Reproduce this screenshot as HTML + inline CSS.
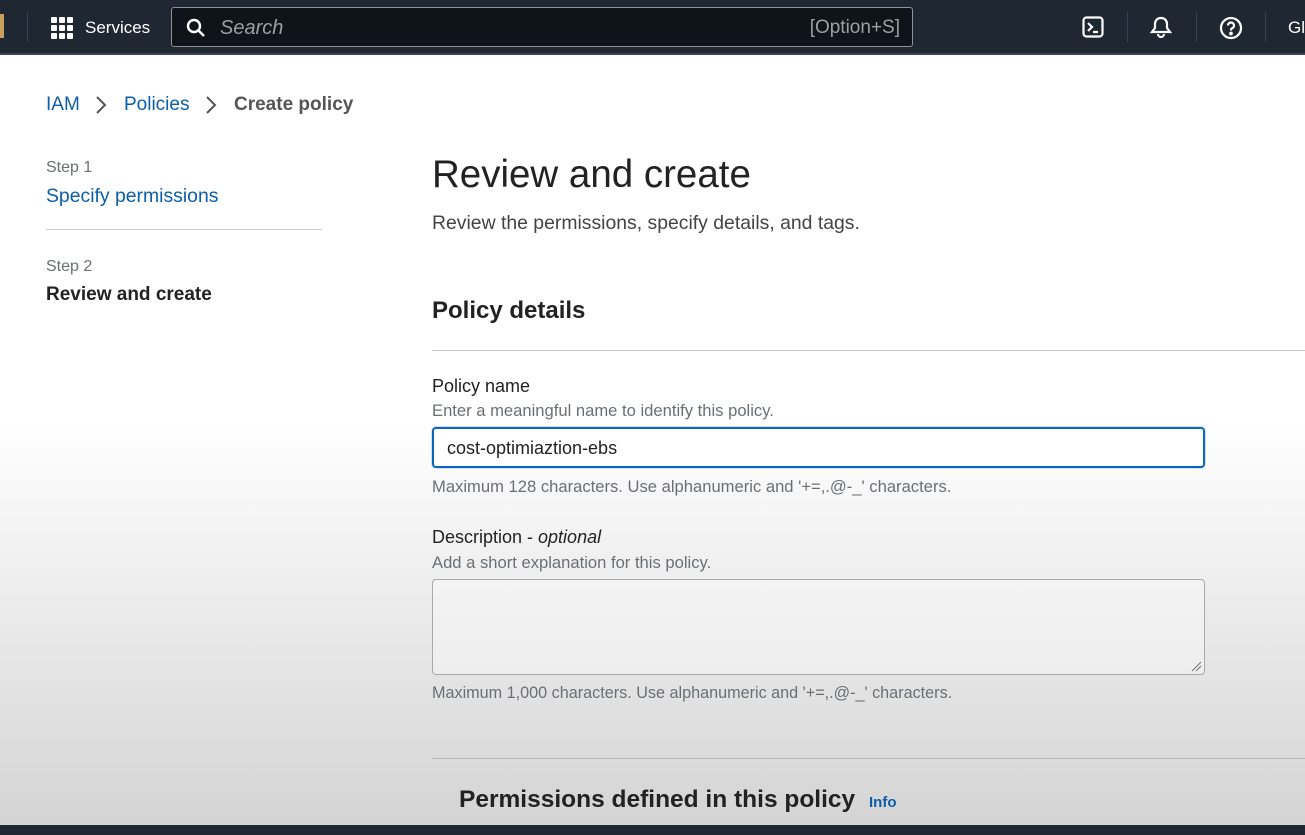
<!DOCTYPE html>
<html><head><style>
*{box-sizing:border-box;margin:0;padding:0}
body{width:1305px;height:835px;overflow:hidden;font-family:"Liberation Sans",sans-serif;position:relative;background:linear-gradient(180deg,#fff 0,#fff 420px,#ececec 600px,#d4d4d4 825px)}
.hdr{position:absolute;left:0;top:0;width:1305px;height:55px;background:#1f2733;border-bottom:2px solid #3a4452}
.a{position:absolute}
.srch{left:171px;top:7px;width:742px;height:40px;background:#0f141a;border:1px solid #8d939b;border-radius:3px}
.sep{position:absolute;top:12px;width:1px;height:30px;background:#39424e}
.bot{position:absolute;left:0;top:825px;width:1305px;height:10px;background:#1f2733}
.gray{color:#6b6f73}
.h{font-size:16.6px}
</style></head><body>
<div class="hdr">
 <div class="a" style="left:0;top:14px;width:4px;height:24px;background:#c8a060"></div>
 <div class="sep" style="left:27px"></div>
 <svg class="a" style="left:51px;top:17px" width="22" height="22" viewBox="0 0 22 22" fill="#fff">
  <rect x="0" y="0" width="6" height="6" rx="1"/><rect x="8" y="0" width="6" height="6" rx="1"/><rect x="16" y="0" width="6" height="6" rx="1"/>
  <rect x="0" y="8" width="6" height="6" rx="1"/><rect x="8" y="8" width="6" height="6" rx="1"/><rect x="16" y="8" width="6" height="6" rx="1"/>
  <rect x="0" y="16" width="6" height="6" rx="1"/><rect x="8" y="16" width="6" height="6" rx="1"/><rect x="16" y="16" width="6" height="6" rx="1"/></svg>
 <div class="a" style="left:85px;top:18px;color:#fff;font-size:17px">Services</div>
 <div class="a srch">
  <svg class="a" style="left:14px;top:10px" width="20" height="20" viewBox="0 0 20 20" fill="none" stroke="#fff" stroke-width="2.4"><circle cx="8" cy="8" r="6"/><path d="M12.5 12.5L18 18"/></svg>
  <div class="a" style="left:48px;top:9px;color:#9aa0a6;font-size:20px;font-style:italic">Search</div>
  <div class="a" style="right:12px;top:9px;color:#9aa0a6;font-size:19px">[Option+S]</div>
 </div>
 <svg class="a" style="left:1082px;top:16px" width="22" height="22" viewBox="0 0 22 22" fill="none" stroke="#fff" stroke-width="2.2"><rect x="1.5" y="1.5" width="19" height="19" rx="3"/><path d="M6 7l4 4-4 4M11 16h5"/></svg>
 <div class="sep" style="left:1127px"></div>
 <svg class="a" style="left:1150px;top:16px" width="22" height="22" viewBox="0 0 22 22" fill="none" stroke="#fff" stroke-width="2.2"><path d="M11 2c-4 0-6 3-6 6v4l-3 4h18l-3-4V8c0-3-2-6-6-6z"/><path d="M8 18a3 3 0 0 0 6 0"/></svg>
 <div class="sep" style="left:1196px"></div>
 <svg class="a" style="left:1219px;top:16px" width="24" height="24" viewBox="0 0 24 24" fill="none" stroke="#fff" stroke-width="2.2"><circle cx="12" cy="12" r="10"/><path d="M9 9.5a3 3 0 1 1 4 2.8c-1 .4-1 1.2-1 2.2"/><circle cx="12" cy="17.5" r=".8" fill="#fff"/></svg>
 <div class="sep" style="left:1265px"></div>
 <div class="a" style="left:1288px;top:18px;color:#fff;font-size:17px">Gl</div>
</div>

<div class="a" style="left:46px;top:94px;font-size:19px;color:#0b5fa8">IAM</div>
<svg class="a" style="left:94px;top:95px" width="14" height="20" viewBox="0 0 14 20" fill="none" stroke="#555" stroke-width="2"><path d="M3 2l8 8-8 8"/></svg>
<div class="a" style="left:124px;top:94px;font-size:19px;color:#0b5fa8">Policies</div>
<svg class="a" style="left:204px;top:95px" width="14" height="20" viewBox="0 0 14 20" fill="none" stroke="#555" stroke-width="2"><path d="M3 2l8 8-8 8"/></svg>
<div class="a" style="left:234px;top:94px;font-size:19px;color:#555;font-weight:bold">Create policy</div>

<div class="a gray" style="left:46px;top:159px;font-size:16px">Step 1</div>
<div class="a" style="left:46px;top:185px;font-size:19.4px;color:#0b5fa8">Specify permissions</div>
<div class="a" style="left:46px;top:229px;width:276px;height:1px;background:#ccc"></div>
<div class="a gray" style="left:46px;top:258px;font-size:16px">Step 2</div>
<div class="a" style="left:46px;top:284px;font-size:19px;color:#222;font-weight:bold">Review and create</div>

<div class="a" style="left:432px;top:153px;font-size:38.5px;color:#222">Review and create</div>
<div class="a" style="left:432px;top:212px;font-size:19.4px;color:#444">Review the permissions, specify details, and tags.</div>
<div class="a" style="left:432px;top:297px;font-size:24px;color:#222;font-weight:bold">Policy details</div>
<div class="a" style="left:432px;top:350px;width:873px;height:1px;background:#c8c8c8"></div>

<div class="a" style="left:432px;top:376px;font-size:18px;color:#222">Policy name</div>
<div class="a gray h" style="left:432px;top:401px">Enter a meaningful name to identify this policy.</div>
<div class="a" style="left:432px;top:427px;width:773px;height:41px;border:2px solid #0b66c2;border-radius:4px;background:#fff;box-shadow:0 0 0 1px #cfe0f5;padding:9px 13px;font-size:18px;color:#222">cost-optimiaztion-ebs</div>
<div class="a gray h" style="left:432px;top:477px">Maximum 128 characters. Use alphanumeric and '+=,.@-_' characters.</div>

<div class="a" style="left:432px;top:527px;font-size:18px;color:#222">Description - <i>optional</i></div>
<div class="a gray h" style="left:432px;top:553px">Add a short explanation for this policy.</div>
<div class="a" style="left:432px;top:579px;width:773px;height:96px;border:1px solid #aaa;border-radius:4px;background:rgba(255,255,255,.35)"></div>
<svg class="a" style="left:1190px;top:660px" width="12" height="12" viewBox="0 0 12 12" stroke="#777"><path d="M2 11L11 2M6 11l5-5"/></svg>
<div class="a gray" style="left:432px;top:684px;font-size:16.2px">Maximum 1,000 characters. Use alphanumeric and '+=,.@-_' characters.</div>

<div class="a" style="left:432px;top:758px;width:873px;height:1px;background:#bbb"></div>
<div class="a" style="left:459px;top:786px;font-size:24.5px;color:#222;font-weight:bold">Permissions defined in this policy</div>
<div class="a" style="left:869px;top:794px;font-size:15px;color:#0b5fa8;font-weight:bold">Info</div>
<div class="bot"></div>
</body></html>
